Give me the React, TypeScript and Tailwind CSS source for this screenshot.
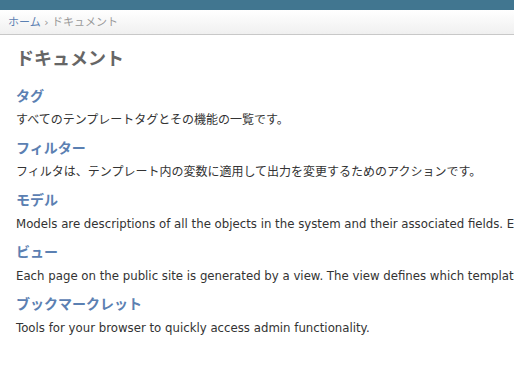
import React from 'react';

const sections = [
  { title: 'タグ', desc: 'すべてのテンプレートタグとその機能の一覧です。', ja: true },
  { title: 'フィルター', desc: 'フィルタは、テンプレート内の変数に適用して出力を変更するためのアクションです。', ja: true },
  { title: 'モデル', desc: 'Models are descriptions of all the objects in the system and their associated fields. Each model has a list of fields which can be accessed as template variables', ja: false },
  { title: 'ビュー', desc: 'Each page on the public site is generated by a view. The view defines which template is used to generate the page and which objects are available to that template.', ja: false },
  { title: 'ブックマークレット', desc: 'Tools for your browser to quickly access admin functionality.', ja: false },
];

export default function App() {
  return (
    <div
      className="w-[514px] h-[368px] overflow-hidden bg-white"
      style={{ fontFamily: '"DejaVu Sans", "Noto Sans CJK JP", sans-serif' }}
    >
      {/* Header */}
      <div className="h-[10px] bg-[#417690]" />

      {/* Breadcrumbs */}
      <div className="h-[25px] px-[8px] pt-[6px] text-[11px] leading-[13px] text-[#999] bg-gradient-to-b from-white to-[#f0f0f0] border-b border-[#c8c8c8] whitespace-nowrap">
        <span className="text-[#5b80b2]">ホーム</span>
        <span> › </span>
        <span>ドキュメント</span>
      </div>

      {/* Content */}
      <div className="px-[16px] pt-[13px]">
        <h1 className="text-[18px] leading-[22px] font-bold text-[#666] mb-[18px]">ドキュメント</h1>
        <div className="flex flex-col gap-[11px]">
          {sections.map((s) => (
            <div key={s.title}>
              <h3 className="text-[14px] leading-[17px] font-bold text-[#5b80b2] mb-[6px]">{s.title}</h3>
              <p
                className={`leading-[18px] text-[#333] whitespace-nowrap ${
                  s.ja ? 'text-[12px]' : 'text-[11.75px]'
                }`}
              >
                {s.desc}
              </p>
            </div>
          ))}
        </div>
      </div>
    </div>
  );
}
